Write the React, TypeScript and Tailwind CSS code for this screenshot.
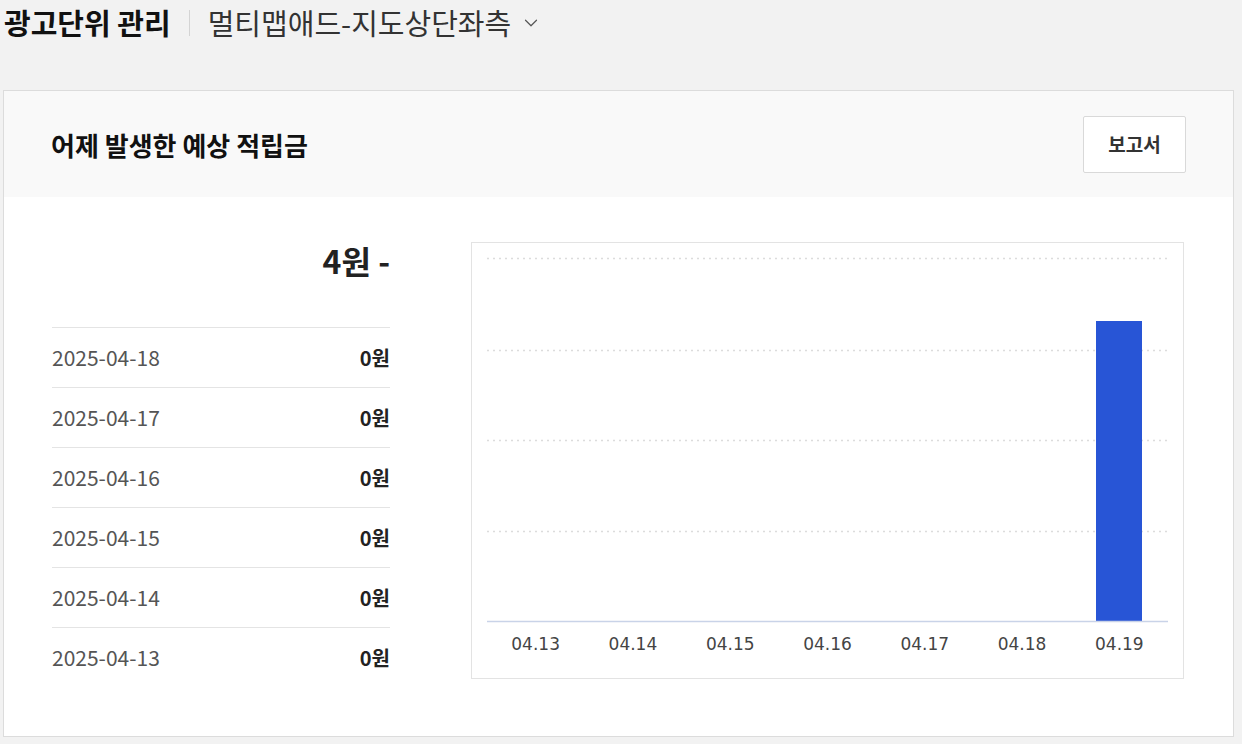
import { ChevronDown } from "lucide-react";

const font = "font-['Noto_Sans_CJK_KR','Noto_Sans',sans-serif]";

const history = [
  { date: "2025-04-18", amount: "0원" },
  { date: "2025-04-17", amount: "0원" },
  { date: "2025-04-16", amount: "0원" },
  { date: "2025-04-15", amount: "0원" },
  { date: "2025-04-14", amount: "0원" },
  { date: "2025-04-13", amount: "0원" },
];

const labels = ["04.13", "04.14", "04.15", "04.16", "04.17", "04.18", "04.19"];

function EarningsChart() {
  const left = 15;
  const right = 696;
  const slot = (right - left) / labels.length;
  const grid = [15, 107, 197, 288];

  return (
    <div className="h-[437px] w-[713px] shrink-0 border border-[#e3e3e3] bg-white">
      <svg width={711} height={435} viewBox="0 0 711 435">
        {grid.map((y) => (
          <line key={y} x1={left} x2={right} y1={y + 0.5} y2={y + 0.5} stroke="#dcdcdc" strokeWidth={1.5} strokeDasharray="2 4" />
        ))}
        <rect x={624} y={78} width={46} height={300} fill="#2855d6" />
        <line x1={left} x2={right} y1={378.5} y2={378.5} stroke="#c9d3e8" strokeWidth={1.5} />
        {labels.map((label, i) => (
          <text
            key={label}
            x={left + slot * i + slot / 2}
            y={407}
            textAnchor="middle"
            fill="#444"
            fontSize={17}
            fontFamily="DejaVu Sans, sans-serif"
          >
            {label}
          </text>
        ))}
      </svg>
    </div>
  );
}

export default function App() {
  return (
    <div className={`min-h-[744px] w-[1242px] bg-[#f2f2f2] pl-[3px] ${font}`}>
      <header className="flex h-[45px] items-center pl-px">
        <h1 className="text-[29px] font-bold leading-none text-[#111]">광고단위 관리</h1>
        <span className="mx-[18px] h-[26px] w-px bg-[#d4d4d4]" />
        <button type="button" className="flex items-center gap-[9px] text-[29px] leading-none text-[#333]">
          멀티맵애드-지도상단좌측
          <ChevronDown className="size-[22px] text-[#555]" strokeWidth={1.3} />
        </button>
      </header>

      <section className="mt-[45px] w-[1231px] border border-[#dcdcdc] bg-white">
        <div className="flex h-[106px] items-center justify-between bg-[#f9f9f9] pl-[47px] pr-[47px]">
          <h2 className="text-[26px] font-bold text-[#111]">어제 발생한 예상 적립금</h2>
          <button
            type="button"
            className="h-[57px] w-[103px] rounded-[2px] border border-[#d9d9d9] bg-white text-[19px] font-bold text-[#333]"
          >
            보고서
          </button>
        </div>

        <div className="flex h-[539px] pl-[48px] pr-[48px] pt-[45px]">
          <div className="w-[338px] shrink-0">
            <div className="h-[85px] text-right text-[32px] font-bold leading-[36px] text-[#222]">4원 -</div>
            {history.map((row) => (
              <div key={row.date} className="flex h-[60px] items-center justify-between border-t border-[#e4e4e4]">
                <span className="text-[21px] text-[#555]">{row.date}</span>
                <span className="text-[20px] font-bold text-[#222]">{row.amount}</span>
              </div>
            ))}
          </div>
          <div className="ml-[81px]">
            <EarningsChart />
          </div>
        </div>
      </section>
    </div>
  );
}
